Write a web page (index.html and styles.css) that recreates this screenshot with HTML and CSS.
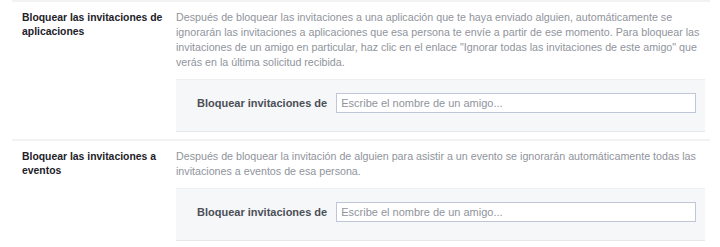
FILE: index.html
```html
<!DOCTYPE html>
<html lang="es">
<head>
<meta charset="utf-8">
<link rel="stylesheet" href="styles.css">
</head>
<body>
<div class="page">
  <section class="row">
    <div class="label">Bloquear las invitaciones de aplicaciones</div>
    <div class="content">
      <p class="desc">Después de bloquear las invitaciones a una aplicación que te haya enviado alguien, automáticamente se ignorarán las invitaciones a aplicaciones que esa persona te envíe a partir de ese momento. Para bloquear las invitaciones de un amigo en particular, haz clic en el enlace "Ignorar todas las invitaciones de este amigo" que verás en la última solicitud recibida.</p>
      <div class="box">
        <span class="field-label">Bloquear invitaciones de</span>
        <input class="field" type="text" placeholder="Escribe el nombre de un amigo...">
      </div>
    </div>
  </section>
  <section class="row">
    <div class="label">Bloquear las invitaciones a eventos</div>
    <div class="content">
      <p class="desc">Después de bloquear la invitación de alguien para asistir a un evento se ignorarán automáticamente todas las invitaciones a eventos de esa persona.</p>
      <div class="box">
        <span class="field-label">Bloquear invitaciones de</span>
        <input class="field" type="text" placeholder="Escribe el nombre de un amigo...">
      </div>
    </div>
  </section>
</div>
</body>
</html>
```
FILE: styles.css
```css
html, body {
  margin: 0;
  padding: 0;
  background: #ffffff;
}
body {
  font-family: "Liberation Sans", Arial, sans-serif;
  font-size: 11px;
}
.page {
  width: 698px;
  margin-left: 12px;
}
.row {
  display: flex;
  border-top: 2px solid #f1f2f4;
  padding: 8px 5px 7px 10px;
}
.label {
  width: 150px;
  flex: none;
  font-size: 10.4px;
  font-weight: bold;
  color: #1d2129;
  line-height: 13.5px;
  padding-top: 1px;
}
.content {
  flex: 1;
  margin-left: 4px;
}
.desc {
  margin: 0 0 9px 0;
  font-size: 10.7px;
  color: #90949c;
  line-height: 15px;
}
.box {
  display: flex;
  align-items: center;
  background: #f6f7f9;
  border-top: 1px solid #eceef1;
  border-bottom: 1px solid #e5e7ea;
  padding: 13px 9px 18px 21px;
}
.field-label {
  font-weight: bold;
  color: #4b4f56;
  margin-right: 9px;
  white-space: nowrap;
}
.field {
  flex: 1;
  box-sizing: border-box;
  height: 20px;
  border: 1px solid #bdc7d8;
  background: #fff;
  padding: 0 4px;
  font-family: "Liberation Sans", Arial, sans-serif;
  font-size: 11px;
  color: #1d2129;
  outline: none;
}
.field::placeholder {
  color: #90949c;
}
```
